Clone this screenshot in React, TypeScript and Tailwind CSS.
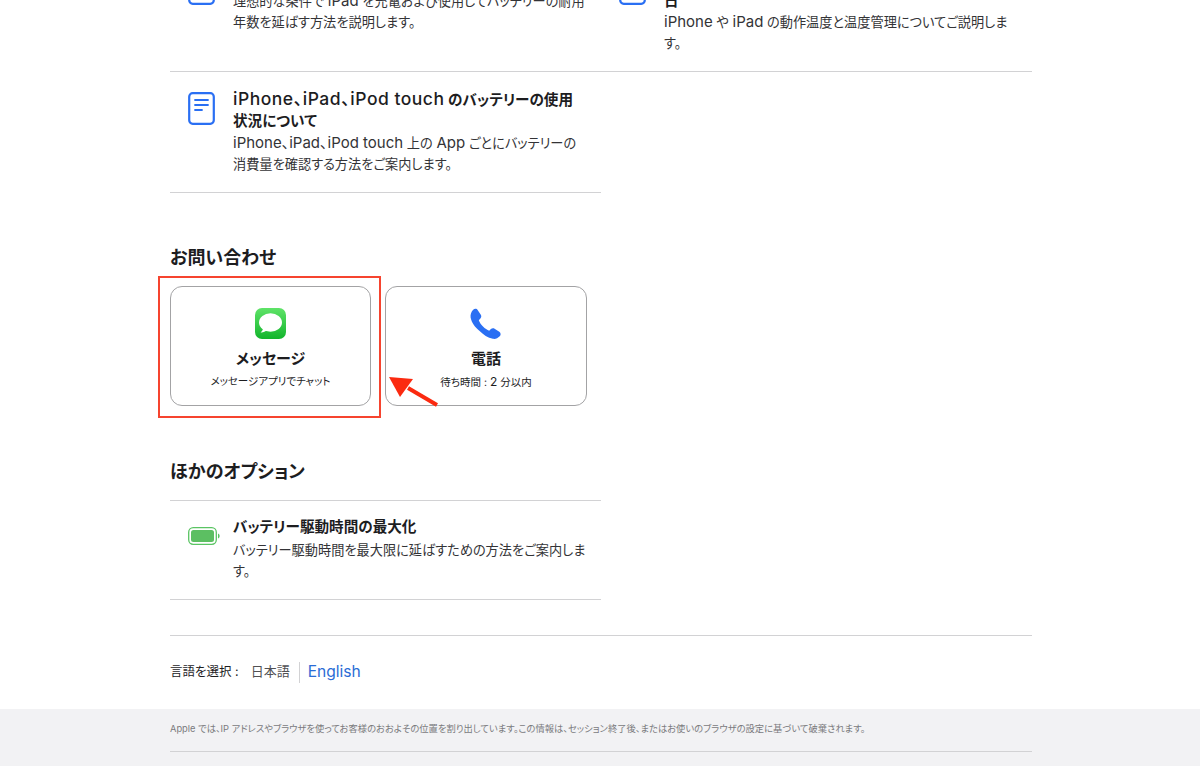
const palt = "[font-feature-settings:'palt']";

// latin runs sit wider than the japanese text around them
function TL({ children }: { children: React.ReactNode }) {
  return <span className="text-[17.5px] font-medium leading-none tracking-[0.5px]">{children}</span>;
}
function DL({ children }: { children: React.ReactNode }) {
  return <span className="text-[15px] leading-none">{children}</span>;
}

function DocIcon() {
  return (
    <svg width="27" height="33" viewBox="0 0 27 33" fill="none" stroke="#2a6ff3" strokeLinecap="round">
      <rect x="1.2" y="1.2" width="24.6" height="30.6" rx="3.5" strokeWidth="2.2" />
      <path d="M7 8h13M7 13h13M7 18h7" strokeWidth="1.8" />
    </svg>
  );
}

function BatteryIcon() {
  return (
    <svg width="32" height="18" viewBox="0 0 32 18" fill="none">
      <rect x="0.7" y="0.7" width="27.6" height="16.6" rx="4.5" stroke="#5ac463" strokeWidth="1.3" />
      <rect x="3" y="3" width="23" height="12" rx="2.5" fill="#5cbf62" />
      <path d="M30 6.5c1.2.4 1.6 1.3 1.6 2.5s-.4 2.1-1.6 2.5z" fill="#5ac463" />
    </svg>
  );
}

function MessagesIcon() {
  return (
    <svg width="31" height="31" viewBox="0 0 31 31">
      <defs>
        <linearGradient id="msg" x1="0" y1="0" x2="0" y2="1">
          <stop offset="0" stopColor="#5fe368" />
          <stop offset="1" stopColor="#12b52c" />
        </linearGradient>
      </defs>
      <rect width="31" height="31" rx="7" fill="url(#msg)" />
      <ellipse cx="15.5" cy="14.5" rx="11.5" ry="9.2" fill="#fff" />
      <path d="M8 20c0 2-1 3.400-2.400 4.400 2.400.2 4.800-.6 6.400-2.400z" fill="#fff" />
    </svg>
  );
}

function PhoneIcon() {
  return (
    <svg width="32" height="32" viewBox="0 0 32 32">
      <path
        fill="#2a6ff3"
        d="M3.200 1.800C4.600.4 6.800.6 7.800 2.200l3 4.600c.8 1.200.6 2.700-.4 3.700L8.800 12.200c.7 2 2.200 4.300 4.200 6.400 2 2 4.200 3.500 6.200 4.200l1.700-1.700c1-1 2.500-1.200 3.700-.4l4.700 3c1.600 1 1.800 3.200.4 4.600-1.900 1.900-4.300 3-6.800 2.500-5-1-9.800-4.400-13.300-7.900C5 19.300 1.500 14.400.6 9.400.2 6.400 1.300 3.700 3.200 1.800z"
      />
    </svg>
  );
}

function Article({ icon, title, desc, className }: { icon: React.ReactNode; title: React.ReactNode; desc: React.ReactNode; className?: string }) {
  return (
    <div className={`flex pl-[18px] ${className ?? ""}`}>
      <div className="w-[45px] shrink-0">{icon}</div>
      <div className="min-w-0">
        <h3 className="text-[14.6px] leading-[21px] font-semibold text-[#1d1d1f] whitespace-nowrap">{title}</h3>
        {desc}
      </div>
    </div>
  );
}

function Desc({ children, className }: { children: React.ReactNode; className?: string }) {
  return <p className={`text-[13.2px] leading-[21px] text-[#333336] whitespace-nowrap ${className ?? ""}`}>{children}</p>;
}

function ContactCard({ icon, title, sub, className }: { icon: React.ReactNode; title: string; sub: React.ReactNode; className?: string }) {
  return (
    <div className={`h-[120px] rounded-[12px] border border-[#a3a3a5] flex flex-col items-center pt-[21px] ${className ?? ""}`}>
      <div className="h-[32px]">{icon}</div>
      <div className="mt-[8px] text-[15px] leading-[21px] font-semibold text-[#1d1d1f]">{title}</div>
      <div className="mt-[5px] text-[10.5px] leading-[16px] text-[#1d1d1f]">{sub}</div>
    </div>
  );
}

export default function App() {
  return (
    <div className={`relative h-[766px] overflow-hidden bg-white flex flex-col ${palt}`} style={{ fontFamily: '"Inter", "Noto Sans CJK JP", sans-serif' }}>
      <div className="w-[862px] ml-[170px]">
        {/* articles, scrolled past the top of the page */}
        <div className="-mt-[48px] grid grid-cols-2 border-b border-[#d2d2d4]">
          <Article
            className="pt-[18px] pb-[17px]"
            icon={<div className="pt-[2px]"><DocIcon /></div>}
            title={<span className="block h-[21px]" />}
            desc={
              <Desc>
                理想的な条件で <DL>iPad</DL> を充電および使用してバッテリーの耐用
                <br />
                年数を延ばす方法を説明します。
              </Desc>
            }
          />
          <Article
            className="pt-[18px] pb-[17px]"
            icon={<div className="pt-[2px]"><DocIcon /></div>}
            title={<span className="block pt-[21px]">日</span>}
            desc={
              <Desc>
                <DL>iPhone</DL> や <DL>iPad</DL> の動作温度と温度管理についてご説明しま
                <br />
                す。
              </Desc>
            }
          />
        </div>
        <div className="w-[431px]">
          <Article
            className="pt-[18px] pb-[17px] border-b border-[#d2d2d4]"
            icon={<div className="pt-[2px]"><DocIcon /></div>}
            title={
              <>
                <TL>iPhone、iPad、iPod touch</TL> のバッテリーの使用
                <br />
                状況について
              </>
            }
            desc={
              <Desc className="mt-[1px]">
                <DL>iPhone、iPad、iPod touch</DL> 上の <DL>App</DL> ごとにバッテリーの
                <br />
                消費量を確認する方法をご案内します。
              </Desc>
            }
          />

          <h2 className="mt-[52px] text-[18px] leading-[26px] font-semibold text-[#1d1d1f]">お問い合わせ</h2>
          <div className="mt-[15px] flex gap-[14px]">
            <ContactCard className="w-[201px]" icon={<MessagesIcon />} title="メッセージ" sub="メッセージアプリでチャット" />
            <ContactCard className="w-[202px]" icon={<PhoneIcon />} title="電話" sub={<>待ち時間 : <span className="text-[12px]">2</span> 分以内</>} />
          </div>

          <h2 className="mt-[53px] text-[18px] leading-[26px] font-semibold text-[#1d1d1f]">ほかのオプション</h2>
          <div className="mt-[15px] border-t border-b border-[#d2d2d4]">
            <Article
              className="pt-[16px] pb-[17px]"
              icon={<div className="pt-[10px]"><BatteryIcon /></div>}
              title="バッテリー駆動時間の最大化"
              desc={
                <Desc className="mt-[2px]">
                  バッテリー駆動時間を最大限に延ばすための方法をご案内しま
                  <br />
                  す。
                </Desc>
              }
            />
          </div>
        </div>

        <div className="mt-[35px] h-[74px] pb-[1px] border-t border-[#d2d2d4] flex items-center">
          <span className="text-[12.5px] text-[#1d1d1f]">言語を選択 :</span>
          <span className="ml-[12px] text-[13px] text-[#515154]">日本語</span>
          <span className="ml-[9px] h-[21px] border-l border-[#d2d2d4]" />
          <span className="ml-[8px] text-[15.6px] text-[#2a6cd6]">English</span>
        </div>
      </div>

      <footer className="flex-1 bg-[#f2f2f4]">
        <div className="w-[862px] ml-[170px] pt-[12px]">
          <p className="text-[9.3px] leading-[16px] text-[#7a7a7d] pb-[14px] border-b border-[#d2d2d4]">
            Apple では、IP アドレスやブラウザを使ってお客様のおおよその位置を割り出しています。この情報は、セッション終了後、またはお使いのブラウザの設定に基づいて破棄されます。
          </p>
        </div>
      </footer>

      {/* annotation drawn over the screenshot */}
      <div className="absolute left-[158px] top-[276px] w-[223px] h-[142px] border-2 border-[#f6442f]" />
      <svg className="absolute left-[380px] top-[370px]" width="64" height="42" viewBox="0 0 64 42">
        <path d="M57 35 28 18" stroke="#fb2a10" strokeWidth="4" />
        <path d="M9 7 33 9 20 27z" fill="#fb2a10" />
      </svg>
    </div>
  );
}
